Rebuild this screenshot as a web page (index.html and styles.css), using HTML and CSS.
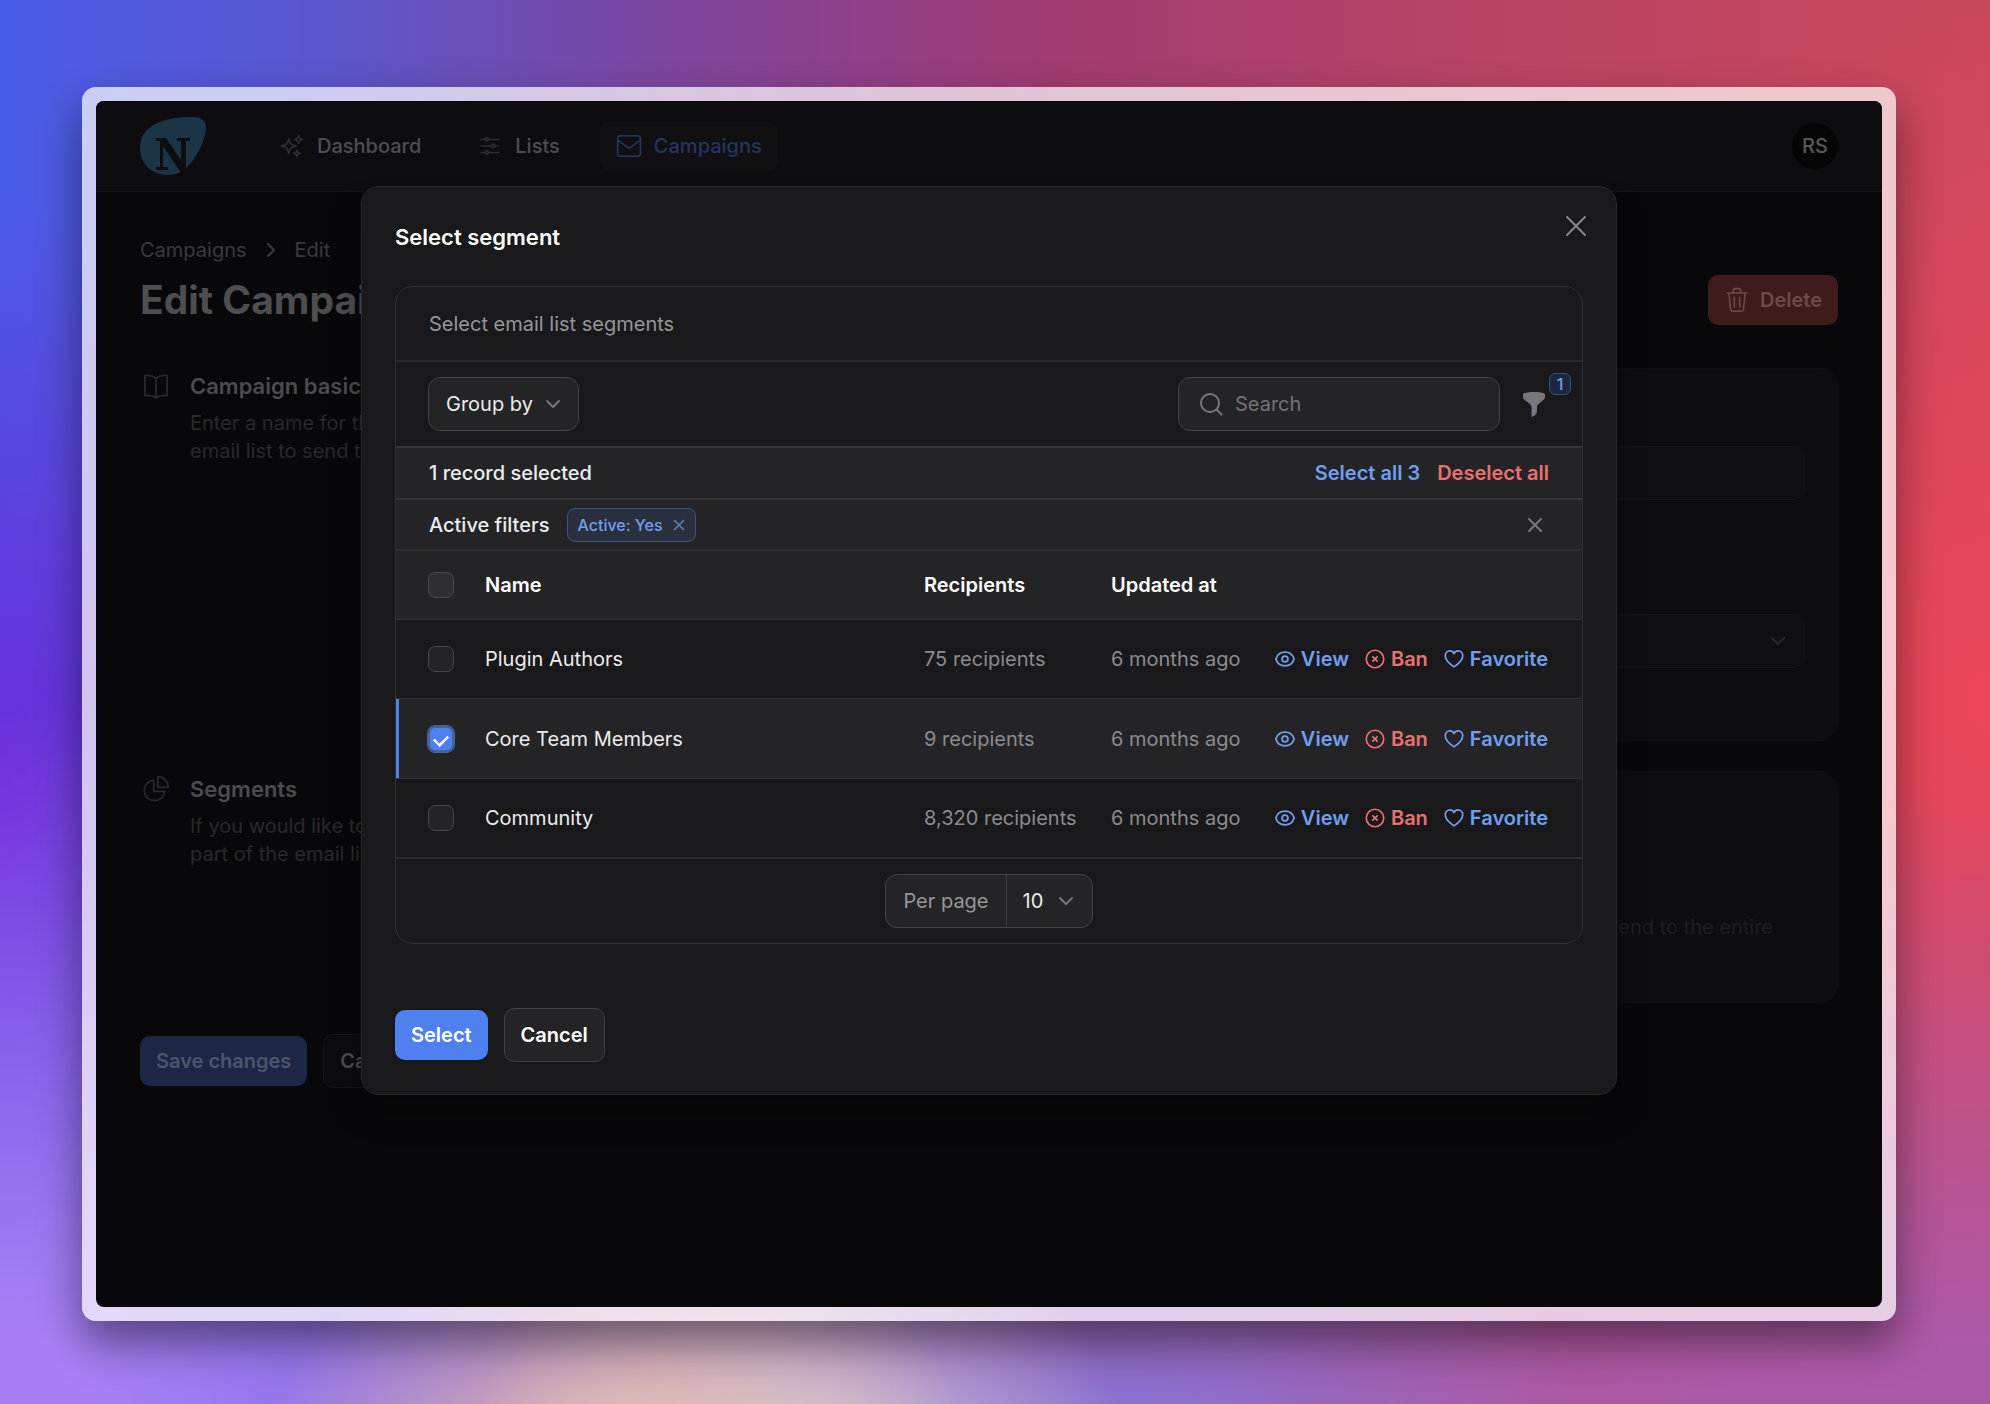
FILE: index.html
```html
<!DOCTYPE html>
<html lang="en">
<head>
<meta charset="utf-8">
<title>Edit Campaign</title>
<link rel="stylesheet" href="styles.css">
</head>
<body>
<svg class="sprite" aria-hidden="true">
  <symbol id="i-down" viewBox="0 0 24 24"><path d="M3 7.5 12 16.5 21 7.5"/></symbol>
  <symbol id="i-x" viewBox="0 0 24 24"><path d="M3 3 21 21M21 3 3 21"/></symbol>
  <symbol id="i-eye" viewBox="1 1 22 22"><path d="M2.04 12.32a1 1 0 0 1 0-.64C3.42 7.51 7.36 4.5 12 4.5c4.64 0 8.57 3.01 9.96 7.18.07.2.07.43 0 .64C20.58 16.49 16.64 19.5 12 19.5c-4.64 0-8.57-3.01-9.96-7.18Z"/><circle cx="12" cy="12" r="3.2"/></symbol>
  <symbol id="i-ban" viewBox="0 0 24 24"><circle cx="12" cy="12" r="10.5"/><path d="M9.4 9.4 14.6 14.6M14.6 9.4 9.4 14.6"/></symbol>
  <symbol id="i-heart" viewBox="0 0 24 24"><path d="M12 21.5C9 19.500 1.500 14.500 1.500 8.200 1.500 4.700 4 2.300 7 2.300 9.200 2.300 11.200 3.600 12 5.600 12.800 3.600 14.800 2.300 17 2.300 20 2.300 22.500 4.700 22.500 8.200 22.500 14.500 15 19.500 12 21.500Z"/></symbol>
</svg>
<div class="frame">
<div class="window">
  <header class="topbar">
    <a class="logo" href="#" aria-label="Home">
      <svg viewBox="0 0 66 58"><path d="M0 31C0 10 20 0 52 0 61 0 66 3 66 11 65 26 55 42 47 50 41 56 35 58 27 58 10 57 0 46 0 31Z" fill="#1b3547"/><path d="M16 21H26L41 43V24H37V21H50V24H46V57H42L23 29V50H28V53H16V50H20V24H16Z" fill="#0d0d0f"/></svg>
    </a>
    <nav class="nav">
      <a href="#"><svg class="icon i26" viewBox="0 0 24 24"><path d="M9.813 15.904 9 18.75l-.813-2.846a4.500 4.500 0 0 0-3.090-3.090L2.250 12l2.846-.813a4.500 4.500 0 0 0 3.090-3.090L9 5.250l.813 2.846a4.500 4.500 0 0 0 3.090 3.090L15.750 12l-2.846.813a4.500 4.500 0 0 0-3.090 3.090ZM18.259 8.715 18 9.750l-.259-1.035a3.375 3.375 0 0 0-2.455-2.456L14.250 6l1.036-.259a3.375 3.375 0 0 0 2.455-2.456L18 2.250l.259 1.035a3.375 3.375 0 0 0 2.456 2.456L21.750 6l-1.035.259a3.375 3.375 0 0 0-2.456 2.456ZM16.894 20.567 16.500 21.750l-.394-1.183a2.250 2.250 0 0 0-1.423-1.423L13.500 18.750l1.183-.394a2.250 2.250 0 0 0 1.423-1.423l.394-1.183.394 1.183a2.250 2.250 0 0 0 1.423 1.423l1.183.394-1.183.394a2.250 2.250 0 0 0-1.423 1.423Z"/></svg>Dashboard</a>
      <a href="#"><svg class="icon i26" viewBox="0 0 24 24"><path d="M10.500 6h9.750M3.750 6H7.500M10.500 18h9.750M3.750 18H7.500M16.500 12h3.750M3.750 12h9.750"/><circle cx="9" cy="6" r="1.500"/><circle cx="15" cy="12" r="1.500"/><circle cx="9" cy="18" r="1.500"/></svg>Lists</a>
      <a href="#" class="active"><svg class="icon i26" viewBox="0 0 24 24"><rect x="1.500" y="2.500" width="21" height="19" rx="2.500"/><path d="M1.700 6.500 10.200 13a3 3 0 0 0 3.600 0L22.300 6.500"/></svg>Campaigns</a>
    </nav>
    <button class="avatar">RS</button>
  </header>

  <main class="page">
    <nav class="crumbs"><a href="#">Campaigns</a><svg class="icon i16 right" viewBox="0 0 24 24"><use href="#i-down"/></svg><a href="#">Edit</a></nav>
    <div class="title-row">
      <h1>Edit Campaign</h1>
      <button class="btn danger"><svg class="icon i26" viewBox="0 0 24 24"><path d="M3 5.500H21M4.500 5.500 6 20.500A2 2 0 0 0 8 22.300H16A2 2 0 0 0 18 20.500L19.500 5.500M8 5.500 8.800 2.500A1.500 1.500 0 0 1 10.200 1.500H13.800A1.500 1.500 0 0 1 15.200 2.500L16 5.500M9.500 9.500V18.500M14.500 9.500V18.500"/></svg>Delete</button>
    </div>
    <div class="sections">
      <section class="section">
        <div class="about">
          <svg class="icon i28" viewBox="0 0 24 24"><path d="M12 6C10.500 3.800 8 2.800 2.500 3V20C8 19.800 10.500 20.300 12 22.500 13.500 20.300 16 19.800 21.500 20V3C16 2.800 13.500 3.800 12 6ZM12 6V22"/></svg>
          <div><h2>Campaign basics</h2><p>Enter a name for the<br>email list to send to</p></div>
        </div>
        <div class="card basics">
          <input class="field" type="text" aria-label="Name">
          <div class="field"><select aria-label="Email list"><option></option></select><svg class="icon i16" viewBox="0 0 24 24"><use href="#i-down"/></svg></div>
        </div>
      </section>
      <section class="section">
        <div class="about">
          <svg class="icon i28" viewBox="0 0 24 24"><path d="M10 4.500A8.800 8.800 0 1 0 19.500 14H10ZM13.500 1.500V10.500H22.500A9 9 0 0 0 13.500 1.500Z"/></svg>
          <div><h2>Segments</h2><p>If you would like to<br>part of the email list</p></div>
        </div>
        <div class="card segments"><p>send to the entire</p></div>
      </section>
    </div>
    <div class="actions"><button class="btn save">Save changes</button><button class="btn ghost">Cancel</button></div>
  </main>

  <div class="modal" role="dialog" aria-labelledby="modal-title">
    <button class="bare close" aria-label="Close"><svg class="icon i24" viewBox="0 0 24 24"><use href="#i-x"/></svg></button>
    <h2 id="modal-title">Select segment</h2>
    <div class="panel">
      <p class="intro">Select email list segments</p>
      <div class="toolbar">
        <div class="control"><select aria-label="Group by"><option>Group by</option></select><svg class="icon i16" viewBox="0 0 24 24"><use href="#i-down"/></svg></div>
        <div class="tools">
          <label class="control search"><svg class="icon i24" viewBox="0 0 24 24"><circle cx="11" cy="11" r="9"/><path d="M17.700 17.700 22.500 22.500"/></svg><input type="search" placeholder="Search" aria-label="Search"></label>
          <button class="bare funnel" aria-label="Filter"><svg viewBox="0 0 24 26"><path d="M1 3C4 .4 20 .4 23 3V6C23 10 15 12 15 16V20C15 23 13 25 9.500 26V16C9.500 12 1 10 1 6Z" fill="#77777d"/></svg><span class="count">1</span></button>
        </div>
      </div>
      <div class="bar selection"><span>1 record selected</span><div class="links"><button class="bare blue">Select all 3</button><button class="bare red">Deselect all</button></div></div>
      <div class="bar filters"><div class="links"><span>Active filters</span><span class="chip">Active: Yes<button class="bare" aria-label="Remove filter"><svg class="icon i12" viewBox="0 0 24 24"><use href="#i-x"/></svg></button></span></div><button class="bare clear" aria-label="Clear filters"><svg class="icon i16" viewBox="0 0 24 24"><use href="#i-x"/></svg></button></div>
      <table>
        <thead><tr><th class="c-check"><input type="checkbox" aria-label="Select all"></th><th>Name</th><th class="c-rec">Recipients</th><th class="c-upd">Updated at</th><th class="c-act"></th></tr></thead>
        <tbody>
          <tr><td><input type="checkbox" aria-label="Plugin Authors"></td><td>Plugin Authors</td><td class="dim">75 recipients</td><td class="dim">6 months ago</td><td><div class="row-actions"><a class="blue" href="#"><svg class="icon i20" viewBox="0 0 24 24"><use href="#i-eye"/></svg>View</a><a class="red" href="#"><svg class="icon i20" viewBox="0 0 24 24"><use href="#i-ban"/></svg>Ban</a><a class="blue" href="#"><svg class="icon i20" viewBox="0 0 24 24"><use href="#i-heart"/></svg>Favorite</a></div></td></tr>
          <tr class="picked"><td><input type="checkbox" checked aria-label="Core Team Members"></td><td>Core Team Members</td><td class="dim">9 recipients</td><td class="dim">6 months ago</td><td><div class="row-actions"><a class="blue" href="#"><svg class="icon i20" viewBox="0 0 24 24"><use href="#i-eye"/></svg>View</a><a class="red" href="#"><svg class="icon i20" viewBox="0 0 24 24"><use href="#i-ban"/></svg>Ban</a><a class="blue" href="#"><svg class="icon i20" viewBox="0 0 24 24"><use href="#i-heart"/></svg>Favorite</a></div></td></tr>
          <tr><td><input type="checkbox" aria-label="Community"></td><td>Community</td><td class="dim">8,320 recipients</td><td class="dim">6 months ago</td><td><div class="row-actions"><a class="blue" href="#"><svg class="icon i20" viewBox="0 0 24 24"><use href="#i-eye"/></svg>View</a><a class="red" href="#"><svg class="icon i20" viewBox="0 0 24 24"><use href="#i-ban"/></svg>Ban</a><a class="blue" href="#"><svg class="icon i20" viewBox="0 0 24 24"><use href="#i-heart"/></svg>Favorite</a></div></td></tr>
        </tbody>
      </table>
      <div class="pager"><div class="control per-page"><label for="per-page">Per page</label><div class="amount"><select id="per-page"><option>10</option></select><svg class="icon i16" viewBox="0 0 24 24"><use href="#i-down"/></svg></div></div></div>
    </div>
    <div class="modal-actions"><button class="btn primary">Select</button><button class="btn outline">Cancel</button></div>
  </div>
</div>
</div>
</body>
</html>
```
FILE: styles.css
```css
* { box-sizing: border-box; }

body {
  margin: 0;
  min-height: 100vh;
  padding: 87px 94px 83px 82px;
  display: flex;
  font: 400 20px/28px Inter, "Liberation Sans", sans-serif;
  color: #ececee;
  background:
    radial-gradient(ellipse 18% 24% at 31% 107%, #ecc8ac, transparent),
    radial-gradient(ellipse 17% 24% at 40% 107%, #d8d4e4, transparent),
    radial-gradient(ellipse 24% 24% at 56% 104%, #8478dc, transparent),
    radial-gradient(ellipse 46% 50% at 0% 100%, #a880f4 10%, transparent),
    radial-gradient(ellipse 20% 44% at 0% 58%, #6c28d8, transparent),
    radial-gradient(ellipse 90% 50% at 100% 106%, #ac5aa8 20%, transparent),
    radial-gradient(ellipse 30% 50% at 100% 50%, #ec465a, transparent),
    linear-gradient(to right, #4a5ce8, #5a56cc 16%, #7b479e 33%, #8e4088 43%, #a03c70 53%, #b84464 75%, #c8485c);
}

h1, h2, p { margin: 0; }
a { color: inherit; text-decoration: none; }
button, input, select { font: inherit; color: inherit; }
.sprite { position: absolute; width: 0; height: 0; }

.icon { flex: none; fill: none; stroke: currentColor; stroke-width: 1.5; stroke-linecap: round; stroke-linejoin: round; }
.i12 { width: 12px; height: 12px; stroke-width: 3; }
.i16 { width: 16px; height: 16px; stroke-width: 3; }
.i20 { width: 20px; height: 20px; stroke-width: 2; }
.i24 { width: 24px; height: 24px; stroke-width: 2; }
.i26 { width: 26px; height: 26px; }
.i28 { width: 28px; height: 28px; }
.right { transform: rotate(-90deg); }

.bare { border: 0; padding: 0; background: none; display: flex; }

.frame {
  flex: 1;
  display: flex;
  padding: 14px;
  border-radius: 14px;
  background: rgba(255, 255, 255, .7);
  box-shadow: 0 22px 44px rgba(0, 0, 0, .45);
}
.window {
  position: relative;
  flex: 1;
  display: flex;
  flex-direction: column;
  border-radius: 8px;
  overflow: hidden;
  background: #08080a;
}

.topbar {
  display: flex;
  align-items: center;
  height: 91px;
  padding: 0 44px;
  background: #0d0d0f;
  border-bottom: 1px solid #131315;
}
.logo { display: flex; width: 66px; }
.logo svg { width: 66px; height: 58px; }
.nav { display: flex; gap: 24px; margin-left: 57px; font-weight: 500; color: #4e4e51; }
.nav a { display: flex; align-items: center; gap: 12px; height: 50px; padding: 0 16px; border-radius: 10px; }
.nav .icon { color: #2f2f32; }
.nav .active, .nav .active .icon { color: #24365c; }
.nav .active { background: #101012; }
.avatar { margin-left: auto; width: 46px; height: 46px; padding: 0; border: 0; border-radius: 50%; background: #050506; color: #59595b; font-weight: 500; }

.page { flex: 1; padding: 44px; }
.crumbs { display: flex; align-items: center; gap: 16px; color: #3a3a3d; }
.title-row { display: flex; justify-content: space-between; align-items: center; height: 56px; margin: 8px 0 40px; }
h1 { font-size: 39px; line-height: 56px; font-weight: 700; color: #4e4e50; }

.btn { display: flex; align-items: center; gap: 10px; height: 50px; padding: 0 16px; border: 0; border-radius: 10px; font-weight: 600; }
.danger { background: #401b1c; color: #6b4b4b; }
.save { background: #1c2645; color: #4f5568; }
.ghost { height: 54px; border: 1px solid #151517; background: #0c0c0e; color: #4c4c4f; }
.primary { background: #4f80f0; color: #fff; }
.outline { height: 54px; border: 1px solid #414145; background: #242427; color: #fff; }

.sections { display: flex; flex-direction: column; gap: 30px; }
.section { display: grid; grid-template-columns: 1fr 2fr; gap: 30px; }
.about { display: flex; gap: 20px; padding-left: 2px; color: #29292b; }
.about .icon { margin-top: 4px; }
.about h2 { font-size: 22px; line-height: 36px; font-weight: 600; color: #4c4c4f; margin-bottom: 5px; }
.card { border: 1px solid #101012; border-radius: 18px; background: #0d0d0f; }
.basics { display: flex; flex-direction: column; gap: 114px; padding: 77px 32px 72px; }
.field { display: flex; align-items: center; width: 100%; height: 54px; padding: 0 18px; border: 1px solid #161618; border-radius: 12px; background: #0f0f11; color: #29292b; }
.field select { flex: 1; appearance: none; border: 0; background: none; }
.segments { padding: 141px 64px 61px; text-align: right; color: #1e1e20; }
.actions, .modal-actions { display: flex; align-items: center; gap: 16px; }
.actions { margin-top: 31px; }

.modal {
  position: absolute;
  top: 85px;
  left: 0;
  right: 0;
  width: 1256px;
  max-width: 94%;
  margin: 0 auto;
  padding: 32px 33px;
  border: 1px solid #29292c;
  border-radius: 18px;
  background: #19191b;
  box-shadow: 0 20px 30px rgba(0, 0, 0, .3);
}
.modal h2 { font-size: 22px; line-height: 36px; font-weight: 600; color: #fff; margin-bottom: 31px; }
.close { position: absolute; top: 27px; right: 28px; color: #85858b; }
.panel { border: 1px solid #313134; border-radius: 18px; overflow: hidden; }
.intro { padding: 23px 33px 22px; color: #96969b; }
.toolbar { display: flex; justify-content: space-between; align-items: center; height: 86px; padding: 0 32px; border-top: 2px solid #29292c; }
.tools { display: flex; align-items: center; gap: 22px; }
.control { display: flex; align-items: center; gap: 12px; height: 54px; padding: 0 17px; border: 1px solid #444448; border-radius: 12px; background: #242427; }
.control select, .control input { appearance: none; border: 0; padding: 0; background: none; outline: 0; }
.control .icon { color: #77777d; }
.search { width: 322px; padding: 0 20px; }
.search input { flex: 1; min-width: 0; }
.search input::placeholder { color: #737378; opacity: 1; }
.funnel { position: relative; margin-right: 4px; }
.funnel svg { width: 24px; height: 26px; }
.count { position: absolute; top: -18px; right: -25px; width: 22px; height: 22px; border: 1px solid #34507f; border-radius: 6px; background: #1d2739; color: #719ff0; font-size: 16px; line-height: 20px; text-align: center; font-weight: 500; }

.bar { display: flex; justify-content: space-between; align-items: center; height: 52px; padding: 0 33px; background: #242426; border-top: 2px solid #343437; font-weight: 500; }
.filters { height: 51px; }
.links { display: flex; align-items: center; gap: 17px; font-weight: 500; }
.blue { color: #719ff0; }
.red { color: #e9716f; }
.selection .links { font-weight: 600; }
.chip { display: flex; align-items: center; gap: 10px; height: 34px; padding: 0 10px; border: 1px solid #3c5586; border-radius: 8px; background: #2a303e; color: #719ff0; font-size: 16px; }
.chip .bare { color: #6280b4; }
.clear { padding-right: 6px; color: #77777d; }

table { width: 100%; border-collapse: separate; border-spacing: 0; table-layout: fixed; }
th, td { padding: 0; text-align: left; border-top: 1px solid #303033; }
th { height: 70px; background: #242426; border-top: 2px solid #2e2e31; font-weight: 600; color: #fff; }
td { height: 79px; }
.c-check { width: 89px; }
.c-rec { width: 187px; }
.c-upd { width: 164px; }
.c-act { width: 307px; }
th:first-child, td:first-child { padding-left: 32px; }
.dim { color: #8b8b90; }
.picked td { background: #242426; height: 80px; }
.picked td:first-child { box-shadow: inset 3px 0 #4f80f0; }
.row-actions { display: flex; justify-content: flex-end; gap: 16px; padding-right: 34px; font-weight: 600; }
.row-actions a { display: flex; align-items: center; gap: 6px; }

input[type="checkbox"] { display: block; appearance: none; width: 26px; height: 26px; margin: 0; border: 1px solid #48484c; border-radius: 7px; background: #242427; }
th input[type="checkbox"] { background: #303033; }
input[type="checkbox"]:checked { border: 2px solid #45649f; background: #4f80f0; outline: 1px solid #45649f; }
input[type="checkbox"]:checked::after { content: ""; display: block; width: 7px; height: 11px; margin: 4px auto 0; border: solid #fff; border-width: 0 3px 3px 0; border-radius: 1px; transform: rotate(45deg); }

.pager { display: flex; justify-content: center; align-items: center; height: 86px; border-top: 2px solid #2c2c2f; }
.per-page { padding: 0; gap: 0; align-items: stretch; }
.per-page label { display: flex; align-items: center; padding: 0 17px; border-right: 1px solid #3c3c40; color: #96969b; }
.amount { display: flex; align-items: center; gap: 14px; padding: 0 18px 0 16px; }
.modal-actions { margin-top: 64px; }
```
